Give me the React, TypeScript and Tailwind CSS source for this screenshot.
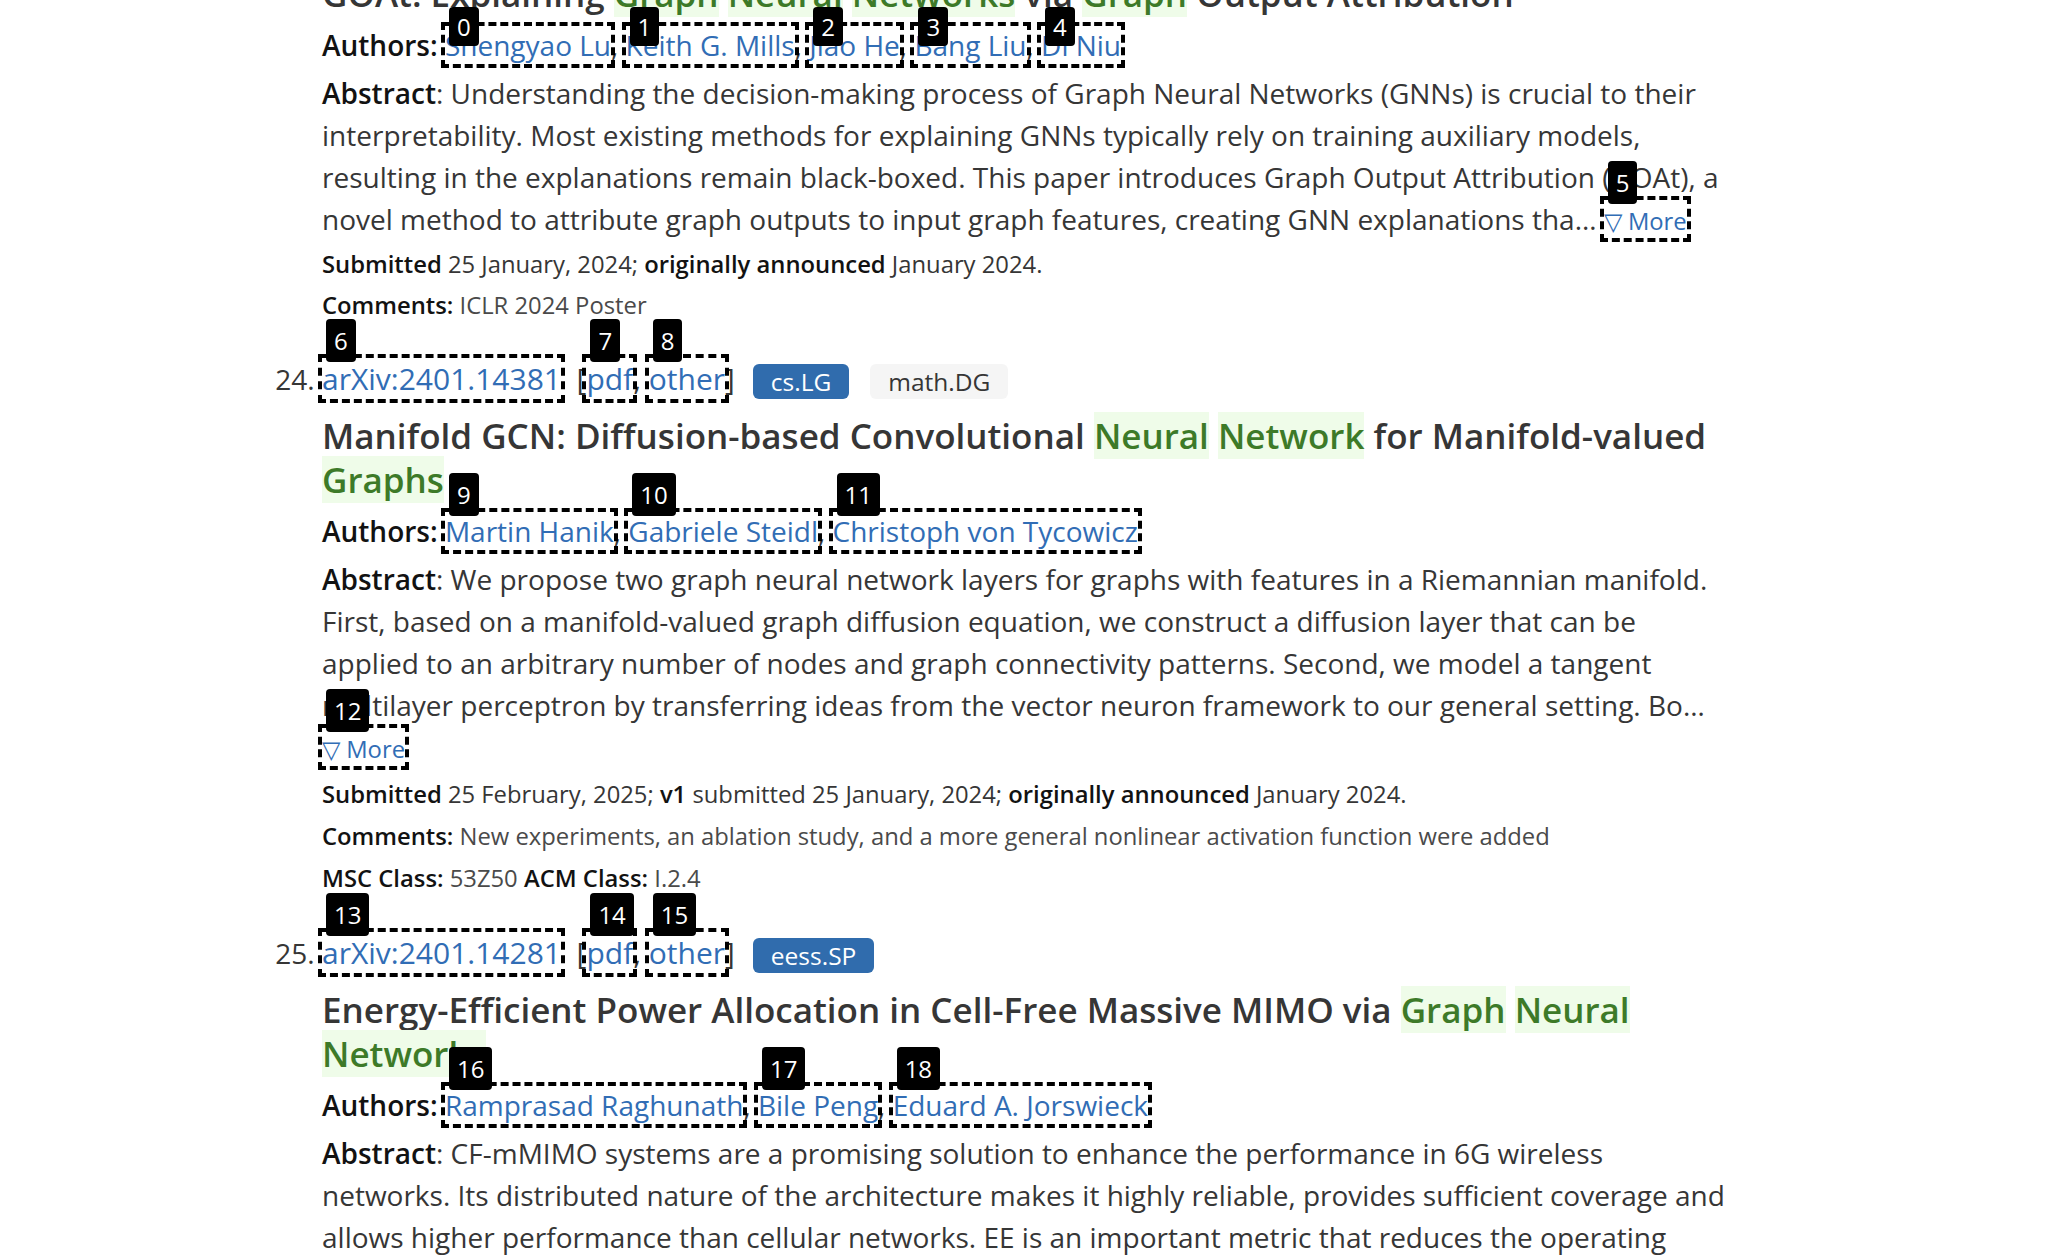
import React from 'react';

const linkCls = 'text-[#316db5]';

function Mark({ n, children, top = false }: { n: number; children: React.ReactNode; top?: boolean }) {
  return (
    <span className="relative outline-4 outline-offset-0 outline-dashed outline-black">
      {children}
      <span
        className={
          top
            ? 'absolute left-[4px] top-[-19px] flex h-[39px] items-center rounded-[4px] bg-black px-[8px] text-[24px] leading-none font-normal text-white'
            : 'absolute left-[4px] bottom-[calc(100%-4px)] flex h-[43px] items-center rounded-[4px] bg-black px-[8px] text-[24px] leading-none font-normal text-white'
        }
      >
        {n}
      </span>
    </span>
  );
}

function Hit({ children }: { children: React.ReactNode }) {
  return <span className="bg-[#effce9] text-[#3d7a28]">{children}</span>;
}

function Tag({ label, primary = false }: { label: string; primary?: boolean }) {
  return (
    <span
      className={
        primary
          ? 'ml-[18px] inline-flex h-[35px] items-center rounded-[6px] bg-[#306cad] px-[18px] align-middle text-[24.5px] leading-none text-white'
          : 'ml-[21px] inline-flex h-[35px] items-center rounded-[6px] bg-[#f5f5f5] px-[18px] align-middle text-[24.5px] leading-none text-[#363636]'
      }
    >
      {label}
    </span>
  );
}

function ListTitle({ id, marks, tags }: { id: string; marks?: number[]; tags: { label: string; primary?: boolean }[] }) {
  const wrap = (i: number, node: React.ReactNode) => (marks ? <Mark n={marks[i]}>{node}</Mark> : node);
  return (
    <div className="text-[30px] leading-[48px] text-[#363636]">
      {wrap(0, <a className={linkCls}>arXiv:{id}</a>)}
      {' \u00a0['}
      {wrap(1, <a className={linkCls}>pdf</a>)}
      {', '}
      {wrap(2, <a className={linkCls}>other</a>)}
      {']'}
      {tags.map((t) => (
        <Tag key={t.label} label={t.label} primary={t.primary} />
      ))}
    </div>
  );
}

function Authors({ names, start, top = false }: { names: string[]; start: number; top?: boolean }) {
  return (
    <p className="mt-[8px] text-[28px] leading-[42px] text-[#363636]">
      <span className="font-semibold text-[#121212]">Authors:</span>{' '}
      {names.map((name, i) => (
        <React.Fragment key={name}>
          <Mark n={start + i} top={top}>
            <a className={linkCls}>{name}</a>
          </Mark>
          {i < names.length - 1 && ', '}
        </React.Fragment>
      ))}
    </p>
  );
}

function Abstract({ text, more }: { text: string; more?: number }) {
  return (
    <p className="mt-[6px] text-[28px] leading-[42px] text-[#363636]">
      <span className="font-semibold text-[#121212]">Abstract</span>: {text}{' '}
      {more !== undefined ? (
        <Mark n={more}>
          <a className="text-[23.8px] text-[#316db5]">▽ More</a>
        </Mark>
      ) : (
        <a className="text-[23.8px] text-[#316db5]">▽ More</a>
      )}
    </p>
  );
}

function Meta({ children, first = false, loose = false }: { children: React.ReactNode; first?: boolean; loose?: boolean }) {
  let cls = 'text-[23.8px] text-[#363636] ';
  if (loose) cls += first ? 'mt-[3px] leading-[42px]' : 'leading-[42px]';
  else cls += first ? 'mt-[2px] leading-[41px]' : 'leading-[41px]';
  return <p className={cls}>{children}</p>;
}

function B({ children }: { children: React.ReactNode }) {
  return <span className="font-semibold text-[#121212]">{children}</span>;
}

export default function App() {
  return (
    <div className="min-h-[1258px] w-full overflow-hidden bg-white font-['Open_Sans','Noto_Sans',sans-serif]">
      <ol start={23} className="mx-auto -mt-[87px] w-[1404px] list-decimal marker:text-[#363636]">
        {/* 23 */}
        <li className="text-[28px] leading-[48px]">
          <ListTitle id="2401.14578" tags={[{ label: 'cs.LG', primary: true }, { label: 'cs.AI' }]} />
          <p className="mt-[11px] text-[35px] leading-[44px] font-semibold text-[#363636]">
            GOAt: Explaining <Hit>Graph</Hit> <Hit>Neural</Hit> <Hit>Networks</Hit> via <Hit>Graph</Hit> Output Attribution
          </p>
          <Authors names={['Shengyao Lu', 'Keith G. Mills', 'Jiao He', 'Bang Liu', 'Di Niu']} start={0} top />
          <Abstract
            more={5}
            text="Understanding the decision-making process of Graph Neural Networks (GNNs) is crucial to their interpretability. Most existing methods for explaining GNNs typically rely on training auxiliary models, resulting in the explanations remain black-boxed. This paper introduces Graph Output Attribution (GOAt), a novel method to attribute graph outputs to input graph features, creating GNN explanations tha…"
          />
          <Meta first>
            <B>Submitted</B> 25 January, 2024; <B>originally announced</B> January 2024.
          </Meta>
          <Meta>
            <B>Comments:</B> <span className="text-[#4a4a4a]">ICLR 2024 Poster</span>
          </Meta>
        </li>

        {/* 24 */}
        <li className="mt-[29px] text-[28px] leading-[48px]">
          <ListTitle id="2401.14381" marks={[6, 7, 8]} tags={[{ label: 'cs.LG', primary: true }, { label: 'math.DG' }]} />
          <p className="mt-[11px] text-[35px] leading-[44px] font-semibold text-[#363636]">
            Manifold GCN: Diffusion-based Convolutional <Hit>Neural</Hit> <Hit>Network</Hit> for Manifold-valued <Hit>Graphs</Hit>
          </p>
          <Authors names={['Martin Hanik', 'Gabriele Steidl', 'Christoph von Tycowicz']} start={9} />
          <Abstract
            more={12}
            text="We propose two graph neural network layers for graphs with features in a Riemannian manifold. First, based on a manifold-valued graph diffusion equation, we construct a diffusion layer that can be applied to an arbitrary number of nodes and graph connectivity patterns. Second, we model a tangent multilayer perceptron by transferring ideas from the vector neuron framework to our general setting. Bo…"
          />
          <Meta first loose>
            <B>Submitted</B> 25 February, 2025; <B>v1</B> submitted 25 January, 2024; <B>originally announced</B> January 2024.
          </Meta>
          <Meta loose>
            <B>Comments:</B>{' '}
            <span className="text-[#4a4a4a]">
              New experiments, an ablation study, and a more general nonlinear activation function were added
            </span>
          </Meta>
          <Meta loose>
            <B>MSC Class:</B> <span className="text-[#4a4a4a]">53Z50</span> <B>ACM Class:</B>{' '}
            <span className="text-[#4a4a4a]">I.2.4</span>
          </Meta>
        </li>

        {/* 25 */}
        <li className="mt-[30px] text-[28px] leading-[48px]">
          <ListTitle id="2401.14281" marks={[13, 14, 15]} tags={[{ label: 'eess.SP', primary: true }]} />
          <p className="mt-[11px] text-[35px] leading-[44px] font-semibold text-[#363636]">
            Energy-Efficient Power Allocation in Cell-Free Massive MIMO via <Hit>Graph</Hit> <Hit>Neural</Hit>{' '}
            <Hit>Networks</Hit>
          </p>
          <Authors names={['Ramprasad Raghunath', 'Bile Peng', 'Eduard A. Jorswieck']} start={16} />
          <Abstract text="CF-mMIMO systems are a promising solution to enhance the performance in 6G wireless networks. Its distributed nature of the architecture makes it highly reliable, provides sufficient coverage and allows higher performance than cellular networks. EE is an important metric that reduces the operating costs and the environmental footprint of the network, which makes power allocation a ke…" />
        </li>
      </ol>
    </div>
  );
}
